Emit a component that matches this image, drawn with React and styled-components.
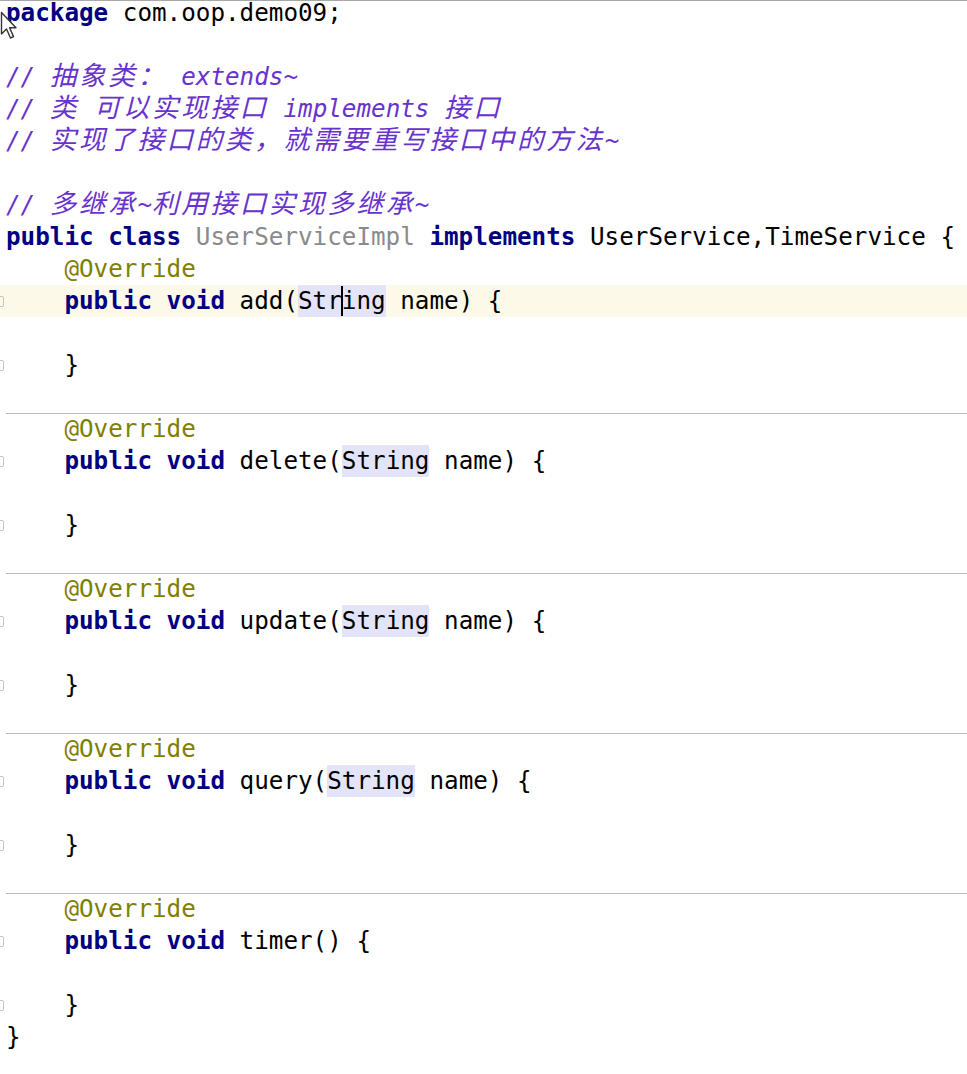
import React from "react";
import styled, { createGlobalStyle } from "styled-components";

const Global = createGlobalStyle`
  html, body { margin: 0; padding: 0; background: #ffffff; }
  body { overflow: hidden; }
`;

const Editor = styled.div`
  position: relative;
  width: 967px;
  height: 1074px;
  overflow: hidden;
  background: #ffffff;
  border-top: 1px solid #a8a8a8;
  box-sizing: border-box;
`;

const Code = styled.div`
  margin-top: -4px;
  font-family: "DejaVu Sans Mono", "Liberation Mono", monospace;
  font-size: 24.25px;
  color: #000000;
`;

const Line = styled.div`
  display: flex;
  height: 32px;
  line-height: 32px;
  white-space: pre;
  background: ${(p) => (p.$current ? "#fcf9e8" : "transparent")};
`;

const Gutter = styled.div`
  width: 6px;
  flex: none;
  display: flex;
  align-items: center;
  overflow: hidden;
`;

const Fold = styled.div`
  flex: none;
  width: 10px;
  height: 11px;
  margin-left: -6px;
  border: 1.5px solid #c4c4c4;
  border-radius: 2px;
  box-sizing: border-box;
`;

const Text = styled.div`
  flex: 1;
  min-width: 0;
  box-shadow: ${(p) => (p.$sep ? "inset 0 1px 0 #b8b8b8" : "none")};
`;

const Kw = styled.span`
  color: #000080;
  font-weight: bold;
`;

const Ann = styled.span`
  color: #808000;
`;

const Unused = styled.span`
  color: #8a8a8a;
`;

const Comment = styled.span`
  color: #6832cc;
  font-style: italic;
`;

const Wide = styled.span`
  font-family: "Noto Sans CJK SC", sans-serif;
  font-size: 26.5px;
  letter-spacing: 2.7px;
  line-height: 18px;
`;

const Hl = styled.span`
  display: inline-block;
  height: 32px;
  background: #e4e4f8;
  vertical-align: top;
`;

const Caret = styled.span`
  display: inline-block;
  width: 2px;
  height: 30px;
  margin: 0 -1px;
  background: #000000;
  vertical-align: top;
  margin-top: 1px;
`;

const Pointer = styled.svg`
  position: absolute;
  left: 0;
  top: 10px;
`;

const CJK = /[\u3000-\u303f\u4e00-\u9fff\uff00-\uffef]+/g;

function CommentText({ text }) {
  const parts = [];
  let last = 0;
  let m;
  CJK.lastIndex = 0;
  while ((m = CJK.exec(text))) {
    if (m.index > last) parts.push(text.slice(last, m.index));
    parts.push(<Wide key={m.index}>{m[0]}</Wide>);
    last = m.index + m[0].length;
  }
  if (last < text.length) parts.push(text.slice(last));
  return <Comment>{parts}</Comment>;
}

const IND = "    ";

function Method({ name, params }) {
  return (
    <>
      {IND}
      <Kw>public void </Kw>
      {name}(
      {params ? (
        <>
          <Hl>String</Hl> name
        </>
      ) : null}
      ) {"{"}
    </>
  );
}

const methods = [
  { name: "delete", params: true },
  { name: "update", params: true },
  { name: "query", params: true },
  { name: "timer", params: false },
];

export default function App() {
  return (
    <>
      <Global />
      <Editor>
        <Code>
          <Line>
            <Gutter />
            <Text>
              <Kw>package</Kw> com.oop.demo09;
            </Text>
          </Line>
          <Line>
            <Gutter />
            <Text />
          </Line>
          <Line>
            <Gutter />
            <Text>
              <CommentText text="// 抽象类： extends~" />
            </Text>
          </Line>
          <Line>
            <Gutter />
            <Text>
              <CommentText text="// 类 可以实现接口 implements 接口" />
            </Text>
          </Line>
          <Line>
            <Gutter />
            <Text>
              <CommentText text="// 实现了接口的类，就需要重写接口中的方法~" />
            </Text>
          </Line>
          <Line>
            <Gutter />
            <Text />
          </Line>
          <Line>
            <Gutter />
            <Text>
              <CommentText text="// 多继承~利用接口实现多继承~" />
            </Text>
          </Line>
          <Line>
            <Gutter />
            <Text>
              <Kw>public class </Kw>
              <Unused>UserServiceImpl</Unused>
              <Kw> implements </Kw>
              UserService,TimeService {"{"}
            </Text>
          </Line>
          <Line>
            <Gutter />
            <Text>
              {IND}
              <Ann>@Override</Ann>
            </Text>
          </Line>
          <Line $current>
            <Gutter>
              <Fold />
            </Gutter>
            <Text>
              {IND}
              <Kw>public void </Kw>
              add(
              <Hl>
                Str
                <Caret />
                ing
              </Hl>{" "}
              name) {"{"}
            </Text>
          </Line>
          <Line>
            <Gutter />
            <Text />
          </Line>
          <Line>
            <Gutter>
              <Fold />
            </Gutter>
            <Text>{IND}{"}"}</Text>
          </Line>
          {methods.map((m) => (
            <React.Fragment key={m.name}>
              <Line>
                <Gutter />
                <Text />
              </Line>
              <Line>
                <Gutter />
                <Text $sep>
                  {IND}
                  <Ann>@Override</Ann>
                </Text>
              </Line>
              <Line>
                <Gutter>
                  <Fold />
                </Gutter>
                <Text>
                  <Method name={m.name} params={m.params} />
                </Text>
              </Line>
              <Line>
                <Gutter />
                <Text />
              </Line>
              <Line>
                <Gutter>
                  <Fold />
                </Gutter>
                <Text>{IND}{"}"}</Text>
              </Line>
            </React.Fragment>
          ))}
          <Line>
            <Gutter />
            <Text>{"}"}</Text>
          </Line>
        </Code>
        <Pointer width="18" height="30" viewBox="0 0 18 30">
          <path
            d="M1.5 1.5 L1.5 23 L6.5 18 L10.5 27 L13.5 25.6 L9.6 16.8 L16 16.8 Z"
            fill="#ffffff"
            stroke="#333333"
            strokeWidth="1.4"
            strokeLinejoin="round"
          />
        </Pointer>
      </Editor>
    </>
  );
}
